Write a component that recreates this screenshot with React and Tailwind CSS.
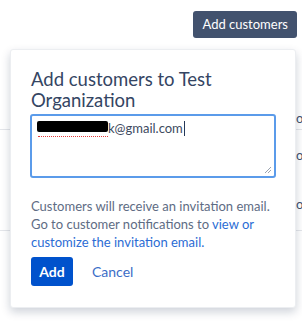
export default function App() {
  return (
    <div className="relative w-[302px] h-[322px] overflow-hidden bg-white font-['Lato',sans-serif]">
      {/* page behind the popup */}
      <div className="absolute left-0 right-0 top-[129px] h-px bg-[#e4e6ea]" />
      <div className="absolute left-0 right-0 top-[230px] h-px bg-[#e4e6ea]" />
      <div className="absolute left-[296px] top-[110px] flex flex-col gap-[21px] text-[13px] leading-[16px] text-[#42526e]">
        <span>o</span>
        <span>o</span>
        <span className="mt-[12px]">o</span>
      </div>

      <div className="flex justify-end pr-[5px] pt-[11px]">
        <button className="h-[27px] px-[9px] rounded-[3px] bg-[#42526e] text-white text-[13px] leading-[27px]">
          Add customers
        </button>
      </div>

      <div className="relative ml-[10px] mt-[11px] w-[286px] bg-white rounded-[3px] border border-[#eceef1] shadow-[0_4px_10px_rgba(9,30,66,0.2)] pl-[19px] pr-[20px] pt-[19px] pb-[21px]">
        <h2 className="pl-px text-[18.5px] leading-[21px] text-[#344563] font-normal">
          Add customers to Test Organization
        </h2>
        <div className="mt-[3px] w-[246px] h-[64px] rounded-[3px] border-2 border-[#5b9bea] bg-white px-[4px] pt-[3px] relative">
          <div className="flex items-center text-[13px] text-[#3d4a60] leading-[18px]">
            <span className="relative inline-block w-[72px] h-[18px]">
              <span className="absolute left-[1px] top-[2px] w-[71px] h-[11px] bg-black rounded-[2px]" />
              <span className="absolute left-[2px] bottom-0 w-[70px] h-px border-b border-dotted border-[#e23b3b]" />
            </span>
            <span>k@gmail.com</span>
            <span className="ml-px w-px h-[15px] bg-[#253858]" />
          </div>
          <svg className="absolute right-[2px] bottom-[2px]" width="8" height="8" viewBox="0 0 8 8">
            <path d="M7 1 L1 7 M7 4 L4 7" stroke="#9aa3b0" strokeWidth="1" />
          </svg>
        </div>
        <p className="mt-[19px] pl-px text-[13px] leading-[18px] text-[#5e6c84]">
          Customers will receive an invitation email. Go to customer notifications to{' '}
          <a className="text-[#2b6cd4]">view or customize the invitation email.</a>
        </p>
        <div className="mt-[6px] flex items-center gap-[19px] pl-px">
          <button className="h-[29px] w-[42px] rounded-[3px] bg-[#0052cc] text-white text-[14px] font-bold">
            Add
          </button>
          <span className="text-[14px] text-[#3b6dc7]">Cancel</span>
        </div>
      </div>
    </div>
  );
}
